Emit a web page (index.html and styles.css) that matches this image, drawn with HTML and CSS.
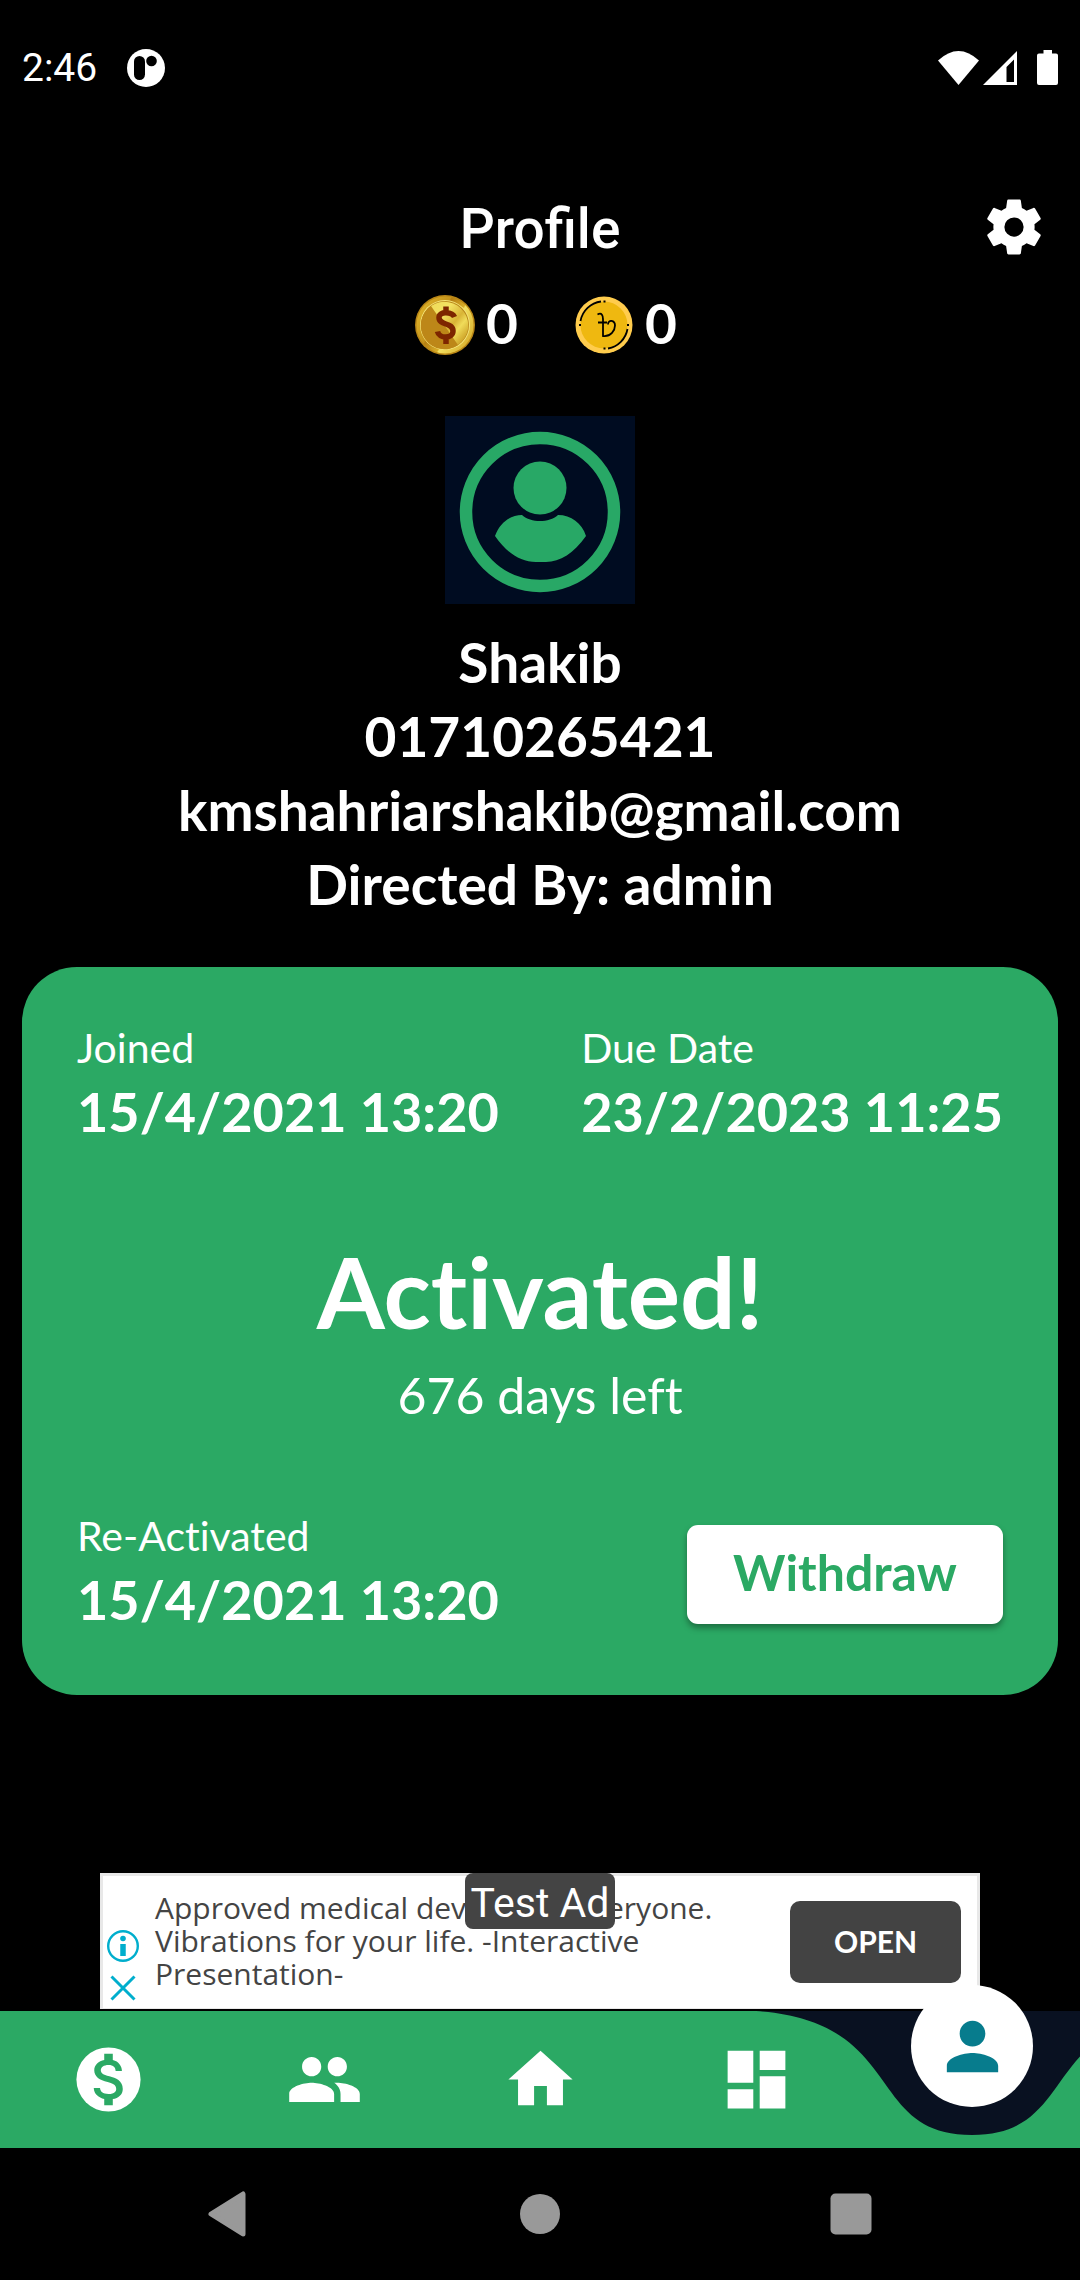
FILE: index.html
```html
<!DOCTYPE html>
<html lang="en">
<head>
<meta charset="utf-8">
<meta name="viewport" content="width=device-width, initial-scale=1">
<title>Profile</title>
<link rel="stylesheet" href="styles.css">
</head>
<body class="screen">
  <div class="status">
    <span class="status-time">2:46</span>
    <svg class="status-app" viewBox="0 0 38 38" aria-hidden="true"><circle cx="19" cy="19" r="19" fill="#fff"/><rect x="7" y="7" width="11" height="24" rx="5.500"/><circle cx="24.500" cy="12" r="5.300"/></svg>
    <svg class="status-icons" viewBox="0 0 120 36" aria-hidden="true" fill="#fff">
      <path d="M0 10.500Q20.500-8.500 41 10.500L20.500 35z"/>
      <path fill-rule="evenodd" d="M79 1V35H45zM76 9.500L68.500 17V32H76z"/>
      <path d="M105.500 0h8.500v3.500h4a2 2 0 0 1 2 2V33a2 2 0 0 1-2 2h-17a2 2 0 0 1-2-2V5.500a2 2 0 0 1 2-2h4.500z"/>
    </svg>
  </div>

  <header class="header">
    <h1 class="title">Profile</h1>
    <button class="settings" type="button" aria-label="Settings">
      <svg class="settings-icon" viewBox="0 0 24 24" fill="#fff"><path d="M19.430 12.980c.040-.320.070-.640.070-.980s-.030-.660-.070-.980l2.110-1.650c.190-.150.240-.420.120-.640l-2-3.460c-.120-.220-.390-.300-.610-.220l-2.490 1c-.520-.400-1.080-.730-1.690-.980l-.380-2.650C14.460 2.180 14.250 2 14 2h-4c-.250 0-.460.180-.490.420l-.380 2.650c-.610.250-1.170.590-1.690.980l-2.490-1c-.230-.090-.490 0-.610.220l-2 3.460c-.130.220-.070.490.120.640l2.110 1.650c-.040.320-.070.650-.070.980s.030.660.070.980l-2.110 1.650c-.190.150-.240.420-.120.640l2 3.460c.120.220.390.300.610.220l2.490-1c.520.400 1.080.730 1.690.980l.380 2.650c.030.240.240.420.490.420h4c.250 0 .460-.180.490-.420l.380-2.650c.610-.250 1.170-.590 1.690-.980l2.490 1c.230.090.490 0 .610-.220l2-3.460c.120-.220.070-.490-.120-.640zM12 15.500A3.500 3.500 0 1 1 12 8.500a3.500 3.500 0 0 1 0 7z"/></svg>
    </button>
  </header>

  <main class="main">
    <div class="coins">
      <div class="coin">
        <svg class="coin-icon" viewBox="0 0 60 60" aria-hidden="true">
          <defs>
            <linearGradient id="gold" x1="0" y1=".2" x2="1" y2=".8"><stop offset="0" stop-color="#e0b429"/><stop offset=".36" stop-color="#c4931c"/><stop offset=".38" stop-color="#b57e12"/><stop offset=".6" stop-color="#d8ad28"/><stop offset=".62" stop-color="#f3e161"/><stop offset="1" stop-color="#d5a928"/></linearGradient>
            <linearGradient id="face" gradientUnits="userSpaceOnUse" x1="14" y1="14" x2="50" y2="44"><stop offset="0" stop-color="#f0dc5a"/><stop offset=".3" stop-color="#f3e263"/><stop offset=".6" stop-color="#d9b436"/><stop offset=".75" stop-color="#f0dc5a"/><stop offset="1" stop-color="#cda227"/></linearGradient>
          </defs>
          <circle cx="30" cy="30" r="30" fill="#b98616"/>
          <circle cx="30" cy="30" r="28.500" fill="url(#gold)"/>
          <circle cx="30" cy="30" r="25" fill="#f5e47a"/>
          <circle cx="30" cy="30" r="24" fill="#b88718"/>
          <path d="M16 11L43 50A23.500 23.500 0 0 1 16 11z" fill="#bd8718"/>
          <path d="M16 11A23.500 23.500 0 1 1 43 50z" fill="url(#face)"/>
          <path d="M39.500 22C37.500 17 24 15.500 24 22.500C24 31 38 27 38 36C38 44 24 44 22.500 36.500M31 11.500V18M31 42V49" fill="none" stroke="#7d2600" stroke-width="5.500"/>
        </svg>
        <span class="coin-value">0</span>
      </div>
      <div class="coin">
        <svg class="coin-icon" viewBox="0 0 60 60" aria-hidden="true">
          <circle cx="30" cy="30" r="28.500" fill="#ffcc4d"/>
          <circle cx="30" cy="30" r="23.500" fill="#efb810"/>
          <g fill="none" stroke="#000" stroke-width="1.800">
            <path d="M6.500 26A24 24 0 0 1 27 6.500M53.500 34A24 24 0 0 1 34 53.500"/>
            <path d="M29.500 6.500h2M5 30h2M53 30h2M29.500 53.500h2"/>
            <path d="M23.500 19.500C28 17 29 21 29 24V41C37 42 41 35 41 30.500C41 25 34 24 34 29.500M24 27.500h9"/>
          </g>
        </svg>
        <span class="coin-value">0</span>
      </div>
    </div>

    <svg class="avatar" viewBox="0 0 190 188" role="img" aria-label="Profile picture">
      <rect width="190" height="188" fill="#000c21"/>
      <circle cx="95" cy="96" r="74" fill="none" stroke="#28a866" stroke-width="12.500"/>
      <circle cx="95" cy="72" r="26.500" fill="#28a866"/>
      <path d="M50 120C55 106 66 99 77 99C86 107 104 107 113 99C126 99 137 107 141 120C129 137 115 146 101 146H91C75 146 61 136 50 120z" fill="#28a866"/>
    </svg>

    <div class="person">
      <p>Shakib</p>
      <p>01710265421</p>
      <p>kmshahriarshakib@gmail.com</p>
      <p>Directed By: admin</p>
    </div>

    <section class="card">
      <div class="card-row">
        <div><p class="label">Joined</p><p class="value">15/4/2021 13:20</p></div>
        <div><p class="label">Due Date</p><p class="value">23/2/2023 11:25</p></div>
      </div>
      <div class="state">
        <h2 class="state-title">Activated!</h2>
        <p class="state-note">676 days left</p>
      </div>
      <div class="card-row">
        <div><p class="label">Re-Activated</p><p class="value">15/4/2021 13:20</p></div>
        <button class="withdraw" type="button">Withdraw</button>
      </div>
    </section>
  </main>

  <aside class="ad">
    <div class="ad-marks">
      <svg class="ad-mark" viewBox="0 0 32 32" fill="none" stroke="#00aecd" aria-hidden="true"><circle cx="16" cy="16" r="14.800" stroke-width="2.400"/><path d="M16 14v12" stroke-width="5.500"/><circle cx="16" cy="8.500" r="2.800" fill="#00aecd" stroke="none"/></svg>
      <svg class="ad-mark" viewBox="0 0 32 32" fill="none" stroke="#00aecd" stroke-width="3" aria-hidden="true"><path d="M4.500 4.500l23 23M27.500 4.500l-23 23"/></svg>
    </div>
    <p class="ad-text">Approved medical devices for everyone.<br>Vibrations for your life. -Interactive<br>Presentation-</p>
    <button class="ad-open" type="button">OPEN</button>
    <span class="ad-badge">Test Ad</span>
  </aside>

  <nav class="tabs">
    <svg class="tabs-shape" viewBox="0 0 1080 137" preserveAspectRatio="none" aria-hidden="true"><path fill="#2ba964" d="M0 0H756C907 10 864 124 972 124C1080 124 1037 10 1188 0V137H0z"/></svg>
    <a class="tab" href="#earn" aria-label="Earnings"><svg class="tab-icon" viewBox="0 0 24 24"><circle cx="12" cy="12" r="10" fill="#fff"/><path fill="#2ba964" transform="translate(1.780 1.330) scale(.889)" d="M11.800 10.900c-2.270-.590-3-1.200-3-2.150 0-1.090 1.010-1.850 2.700-1.850 1.780 0 2.440.850 2.500 2.100h2.210c-.070-1.720-1.120-3.300-3.210-3.810V3h-3v2.160c-1.940.420-3.500 1.680-3.500 3.610 0 2.310 1.910 3.460 4.700 4.130 2.500.600 3 1.480 3 2.410 0 .690-.490 1.790-2.700 1.790-2.060 0-2.870-.920-2.980-2.100h-2.200c.120 2.190 1.760 3.420 3.680 3.830V21h3v-2.150c1.950-.370 3.500-1.500 3.500-3.550 0-2.840-2.430-3.810-4.700-4.400z"/></svg></a>
    <a class="tab" href="#team" aria-label="Team"><svg class="tab-icon" viewBox="0 0 24 24" fill="#fff"><path d="M16 11c1.660 0 2.990-1.340 2.990-3S17.660 5 16 5s-3 1.340-3 3 1.340 3 3 3zm-8 0c1.660 0 2.990-1.340 2.990-3S9.660 5 8 5 5 6.340 5 8s1.340 3 3 3zm0 2c-2.330 0-7 1.170-7 3.500V19h14v-2.500c0-2.330-4.670-3.500-7-3.500zm8 0c-.290 0-.620.020-.970.050 1.160.840 1.970 1.970 1.970 3.450V19h6v-2.500c0-2.330-4.670-3.500-7-3.500z"/></svg></a>
    <a class="tab" href="#home" aria-label="Home"><svg class="tab-icon" viewBox="0 0 24 24" fill="#fff"><path d="M10 20v-6h4v6h5v-8h3L12 3 2 12h3v8z"/></svg></a>
    <a class="tab" href="#dashboard" aria-label="Dashboard"><svg class="tab-icon" viewBox="0 0 24 24" fill="#fff"><path d="M3 13h8V3H3v10zm0 8h8v-6H3v6zm10 0h8V11h-8v10zm0-18v6h8V3h-8z"/></svg></a>
    <a class="tab tab-current" href="#profile" aria-label="Profile" aria-current="page"><span class="tab-bubble"><svg class="tab-icon" viewBox="0 0 24 24" fill="#077c8d"><path d="M12 12c2.210 0 4-1.790 4-4s-1.790-4-4-4-4 1.790-4 4 1.790 4 4 4zm0 2c-2.670 0-8 1.340-8 4v2h16v-2c0-2.660-5.330-4-8-4z"/></svg></span></a>
  </nav>

  <div class="system">
    <button class="system-key" type="button" aria-label="Back"><svg class="system-icon" viewBox="0 0 46 46"><path d="M5 23L37 3V43z" fill="#999" stroke="#999" stroke-width="5" stroke-linejoin="round"/></svg></button>
    <button class="system-key" type="button" aria-label="Home"><svg class="system-icon" viewBox="0 0 46 46"><circle cx="23" cy="23" r="20" fill="#999"/></svg></button>
    <button class="system-key" type="button" aria-label="Recent apps"><svg class="system-icon" viewBox="0 0 46 46"><rect x="2.500" y="2.500" width="41" height="41" rx="5" fill="#999"/></svg></button>
  </div>
</body>
</html>
```
FILE: styles.css
```css
* {
  box-sizing: border-box;
}

h1, h2, p {
  margin: 0;
}

button {
  border: 0;
  padding: 0;
  background: none;
  font: inherit;
  color: inherit;
}

svg {
  display: block;
}

.screen {
  margin: 0;
  min-height: 100vh;
  display: flex;
  flex-direction: column;
  background: #000;
  color: #fff;
  font-family: Lato, "Noto Sans", sans-serif;
}

.status {
  display: flex;
  align-items: center;
  gap: 30px;
  height: 136px;
  padding: 0 22px;
}

.status-time {
  font: 400 39px/48px Roboto, sans-serif;
}

.status-app {
  width: 38px;
  height: 38px;
}

.status-icons {
  width: 120px;
  height: 36px;
  margin-left: auto;
}

.header {
  display: grid;
  grid-template-columns: 1fr auto 1fr;
  align-items: start;
  padding: 60px 33px 0;
}

.title {
  grid-column: 2;
  font: 500 55px/66px Roboto, sans-serif;
}

.settings {
  justify-self: end;
  margin-top: -2px;
}

.settings-icon {
  width: 66px;
  height: 66px;
}

.main {
  display: flex;
  flex-direction: column;
  align-items: center;
  padding: 33px 22px 40px;
}

.coins {
  display: flex;
  gap: 56px;
  padding-left: 12px;
}

.coin {
  display: flex;
  align-items: center;
  gap: 11px;
}

.coin-icon {
  width: 60px;
  height: 60px;
}

.coin-value {
  font-size: 55px;
  font-weight: 700;
  line-height: 56px;
  padding-bottom: 4px;
}

.avatar {
  width: 190px;
  height: 188px;
  margin-top: 61px;
}

.person {
  margin-top: 21px;
  text-align: center;
  font-size: 55px;
  font-weight: 700;
  line-height: 74px;
}

.card {
  align-self: stretch;
  margin-top: 46px;
  padding: 54px 55px 58px;
  border-radius: 55px;
  background: #2ba964;
  font-variant-ligatures: none;
}

.card-row {
  display: flex;
  justify-content: space-between;
  align-items: flex-end;
}

.label {
  font-size: 41px;
  line-height: 54px;
}

.value {
  font-size: 54px;
  font-weight: 700;
  line-height: 74px;
}

.state {
  padding: 82px 0;
  text-align: center;
}

.state-title {
  font-size: 98px;
  font-weight: 700;
  line-height: 120px;
}

.state-note {
  margin-top: 12px;
  font-size: 50px;
  line-height: 64px;
}

.withdraw {
  width: 316px;
  height: 99px;
  margin-bottom: 13px;
  padding-bottom: 6px;
  border-radius: 11px;
  background: #fff;
  color: #2ba964;
  font-size: 50px;
  font-weight: 700;
  box-shadow: 0 4px 6px rgba(0, 0, 0, 0.35);
}

.ad {
  position: relative;
  display: flex;
  align-items: center;
  width: 880px;
  max-width: 100%;
  height: 136px;
  margin: auto auto 2px;
  padding: 0 16px 0 3px;
  border: 3px solid #e8e8e8;
  border-bottom-width: 1px;
  background: #fff;
  color: #444;
}

.ad-marks {
  display: grid;
  align-self: flex-end;
  gap: 10px;
  padding-bottom: 4px;
}

.ad-mark {
  width: 34px;
  height: 32px;
}

.ad-text {
  margin-left: 15px;
  padding-bottom: 4px;
  font: 400 30px/33px "Open Sans", sans-serif;
}

.ad-open {
  width: 171px;
  height: 82px;
  margin-left: auto;
  padding-bottom: 2px;
  border-radius: 10px;
  background: #434343;
  color: #fff;
  font-size: 30px;
  font-weight: 700;
}

.ad-badge {
  position: absolute;
  top: -3px;
  right: 0;
  left: 0;
  width: 150px;
  height: 56px;
  margin: 0 auto;
  border-radius: 8px;
  background: #444;
  color: #fff;
  font: 400 41px/60px Roboto, sans-serif;
  text-align: center;
}

.tabs {
  position: relative;
  display: grid;
  grid-template-columns: repeat(5, 1fr);
  height: 137px;
  background: #091121;
}

.tabs-shape {
  position: absolute;
  inset: 0;
  width: 100%;
  height: 100%;
}

.tab {
  position: relative;
  display: flex;
  justify-content: center;
  align-items: center;
}

.tab-current {
  align-items: flex-start;
}

.tab-bubble {
  display: flex;
  justify-content: center;
  align-items: center;
  width: 122px;
  height: 122px;
  margin-top: -26px;
  border-radius: 50%;
  background: #fff;
}

.tab-icon {
  width: 77px;
  height: 77px;
}

.system {
  display: grid;
  grid-template-columns: repeat(3, 1fr);
  height: 132px;
  padding: 0 74px;
}

.system-key {
  display: flex;
  justify-content: center;
  align-items: center;
}

.system-icon {
  width: 46px;
  height: 46px;
}
```
